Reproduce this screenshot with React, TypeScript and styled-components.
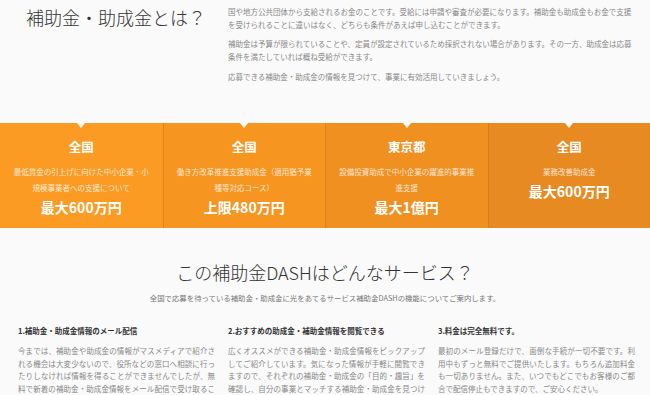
import React from 'react';
import styled, { createGlobalStyle } from 'styled-components';

const GlobalStyle = createGlobalStyle`
  body {
    margin: 0;
    background: #fafafa;
    font-family: "Noto Sans CJK JP", "Noto Sans", sans-serif;
    color: #333;
  }
`;

const Intro = styled.section`
  display: flex;
  height: 123px;
  box-sizing: border-box;
  padding: 4px 0 0 26px;
`;

const IntroTitle = styled.h1`
  width: 202px;
  margin: 0;
  font-size: 18px;
  line-height: 26px;
  font-weight: 300;
  color: #333;
`;

const IntroText = styled.div`
  width: 408px;
  padding-top: 0.5px;
`;

const Para = styled.p`
  margin: 0 0 6.5px;
  font-size: 7.5px;
  line-height: 13px;
  color: #888;
`;

const Band = styled.section`
  display: grid;
  grid-template-columns: repeat(4, 1fr);
  height: 105px;
`;

const Spot = styled.div<{ $bg: string; $first?: boolean }>`
  position: relative;
  background: ${p => p.$bg};
  border-left: ${p => (p.$first ? 'none' : '1px solid rgba(190, 100, 10, 0.35)')};
  padding: 16px 12px 0;
  text-align: center;
  color: #fff;

  &::before {
    content: '';
    position: absolute;
    top: 0;
    left: 50%;
    margin-left: -4px;
    border-left: 4px solid transparent;
    border-right: 4px solid transparent;
    border-top: 5px solid #fafafa;
  }
`;

const SpotArea = styled.div`
  font-size: 12.5px;
  line-height: 16px;
  font-weight: 700;
`;

const SpotName = styled.div`
  margin-top: 9px;
  font-size: 7.5px;
  line-height: 16px;
  color: rgba(255, 255, 255, 0.8);
`;

const SpotAmount = styled.div`
  margin-top: 2px;
  font-size: 14px;
  line-height: 18px;
  font-weight: 700;
`;

const Service = styled.section`
  padding-top: 31px;
`;

const ServiceTitle = styled.h2`
  margin: 0;
  text-align: center;
  font-size: 18px;
  line-height: 26px;
  font-weight: 300;
  color: #333;
`;

const ServiceLead = styled.p`
  margin: 6px 0 0;
  text-align: center;
  font-size: 7.4px;
  line-height: 14px;
  color: #777;
`;

const Features = styled.div`
  display: grid;
  grid-template-columns: repeat(3, 197px);
  column-gap: 13px;
  padding: 19px 0 0 18px;
`;

const Feature = styled.div``;

const FeatureHead = styled.h3`
  margin: 0;
  font-size: 7.5px;
  line-height: 14px;
  font-weight: 700;
  color: #333;
`;

const FeatureBody = styled.p`
  margin: 7px 0 0;
  font-size: 7.5px;
  line-height: 12.5px;
  color: #888;
  text-align: justify;
`;

const spots = [
  { area: '全国', name: '最低賃金の引上げに向けた中小企業・小規模事業者への支援について', amount: '最大600万円', bg: '#fb9b23' },
  { area: '全国', name: '働き方改革推進支援助成金（適用猶予業種等対応コース）', amount: '上限480万円', bg: '#f6951f' },
  { area: '東京都', name: '設備投資助成で中小企業の躍進的事業推進支援', amount: '最大1億円', bg: '#f09021' },
  { area: '全国', name: '業務改善助成金', amount: '最大600万円', bg: '#e88a22' },
];

const features = [
  {
    head: '1.補助金・助成金情報のメール配信',
    body: '今までは、補助金や助成金の情報がマスメディアで紹介される機会は大変少ないので、役所などの窓口へ相談に行ったりしなければ情報を得ることができませんでしたが、無料で新着の補助金・助成金情報をメール配信で受け取ることができます。',
  },
  {
    head: '2.おすすめの助成金・補助金情報を閲覧できる',
    body: '広くオススメができる補助金・助成金情報をピックアップしてご紹介しています。気になった情報が手軽に閲覧できますので、それぞれの補助金・助成金の「目的・趣旨」を確認し、自分の事業とマッチする補助金・助成金を見つけることができます。',
  },
  {
    head: '3.料金は完全無料です。',
    body: '最初のメール登録だけで、面倒な手続が一切不要です。利用中もずっと無料でご提供いたします。もちろん追加料金も一切ありません。また、いつでもどこでもお客様のご都合で配信停止もできますので、ご安心ください。',
  },
];

const App: React.FC = () => {
  return (
    <>
      <GlobalStyle />
      <Intro>
        <IntroTitle>補助金・助成金とは？</IntroTitle>
        <IntroText>
          <Para>
            国や地方公共団体から支給されるお金のことです。受給には申請や審査が必要になります。補助金も助成金もお金で支援を受けられることに違いはなく、どちらも条件があえば申し込むことができます。
          </Para>
          <Para>
            補助金は予算が限られていることや、定員が設定されているため採択されない場合があります。その一方、助成金は応募条件を満たしていれば概ね受給ができます。
          </Para>
          <Para>応募できる補助金・助成金の情報を見つけて、事業に有効活用していきましょう。</Para>
        </IntroText>
      </Intro>

      <Band>
        {spots.map((s, i) => (
          <Spot key={i} $bg={s.bg} $first={i === 0}>
            <SpotArea>{s.area}</SpotArea>
            <SpotName>{s.name}</SpotName>
            <SpotAmount>{s.amount}</SpotAmount>
          </Spot>
        ))}
      </Band>

      <Service>
        <ServiceTitle>この補助金DASHはどんなサービス？</ServiceTitle>
        <ServiceLead>
          全国で応募を待っている補助金・助成金に光をあてるサービス補助金DASHの機能についてご案内します。
        </ServiceLead>
        <Features>
          {features.map((f, i) => (
            <Feature key={i}>
              <FeatureHead>{f.head}</FeatureHead>
              <FeatureBody>{f.body}</FeatureBody>
            </Feature>
          ))}
        </Features>
      </Service>
    </>
  );
};

export default App;
